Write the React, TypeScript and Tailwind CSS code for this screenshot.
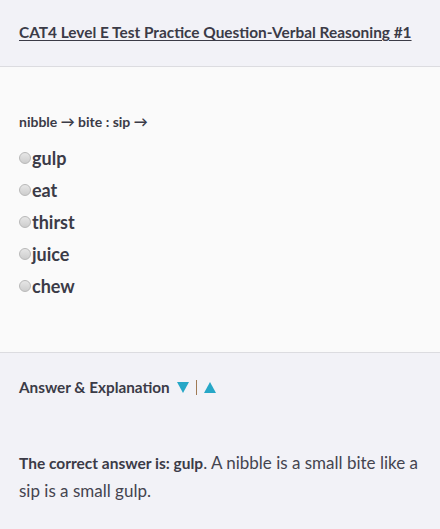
const options = ["gulp", "eat", "thirst", "juice", "chew"];

const Triangle = ({ up }: { up?: boolean }) => (
  <svg width="12" height="11" viewBox="0 0 12 11" className="shrink-0">
    <path d={up ? "M6 0 L12 11 L0 11 Z" : "M0 0 L12 0 L6 11 Z"} fill="#27a7c7" />
  </svg>
);

const App = () => {
  return (
    <div
      className="w-[440px] min-h-[529px] bg-[#f2f2f7] text-[#3b3b47]"
      style={{ fontFamily: "Lato, 'Noto Sans', sans-serif" }}
    >
      <div className="h-[67px] px-[19px] pt-[20px] border-b border-[#dcdce0]">
        <a href="#" className="text-[15.4px] font-bold underline underline-offset-2 text-[#3b3b47]">
          CAT4 Level E Test Practice Question-Verbal Reasoning #1
        </a>
      </div>

      <div className="h-[286px] bg-[#fafafa] px-[19px] pt-[45px] border-b border-[#dcdce0]">
        <p className="text-[14px] font-bold leading-[20px]">nibble → bite : sip →</p>
        <div className="mt-[10px] flex flex-col">
          {options.map((opt) => (
            <label key={opt} className="flex items-center h-[32px]">
              <span className="w-[12px] h-[12px] -mt-[1px] mr-[1px] rounded-full border border-[#b8b8b8] bg-gradient-to-b from-[#e6e6e6] to-[#cdcdcd]" />
              <span className="text-[18px] font-bold">{opt}</span>
            </label>
          ))}
        </div>
      </div>

      <div className="px-[19px] pt-[24px]">
        <div className="flex items-center text-[15.3px] font-bold h-[20px]">
          <span>Answer &amp; Explanation</span>
          <span className="ml-[7px]">
            <Triangle />
          </span>
          <span className="mx-[7px] w-[1px] h-[15px] bg-[#a07a55]" />
          <Triangle up />
        </div>
        <p className="mt-[52px] text-[17px] leading-[28px] font-normal text-[#44444f]">
          <strong className="font-bold text-[15.5px] text-[#3b3b47]">The correct answer is: gulp</strong>. A nibble is a small bite like a sip is a small gulp.
        </p>
      </div>
    </div>
  );
};

export default App;
